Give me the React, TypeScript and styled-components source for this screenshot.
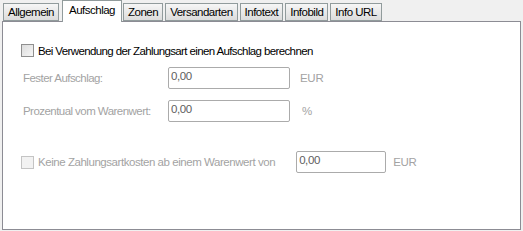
import React from 'react';
import styled, { createGlobalStyle } from 'styled-components';

const GlobalStyle = createGlobalStyle`
    html, body {
        margin: 0;
        padding: 0;
        background: #f0f0f0;
    }
    body {
        font-family: 'Liberation Sans', Arial, sans-serif;
        font-size: 11px;
    }
`;

const Window = styled.div`
    width: 523px;
    height: 231px;
    box-sizing: border-box;
    padding: 0 2px 1px 2px;
    display: flex;
    flex-direction: column;
`;

const TabStrip = styled.div`
    display: flex;
    align-items: flex-end;
    padding-left: 1px;
    height: 21px;
    position: relative;
    z-index: 1;
`;

const Tab = styled.div<{ $active?: boolean }>`
    box-sizing: border-box;
    height: ${(p) => (p.$active ? '22px' : '18px')};
    margin: ${(p) => (p.$active ? '0 1px -1px 1px' : '0 2px 0 0')};
    padding: ${(p) => (p.$active ? '2px 6px 0 6px' : '1px 4px 0 4px')};
    border: 1px solid #919b9c;
    border-bottom: ${(p) => (p.$active ? 'none' : '1px solid #919b9c')};
    background: ${(p) => (p.$active ? '#ffffff' : 'linear-gradient(#f6f6f6, #dcdcdc)')};
    color: #000;
    font-size: 11.5px;
    letter-spacing: -0.5px;
    line-height: 15px;
    white-space: nowrap;
`;

const Panel = styled.div`
    flex: 1;
    box-sizing: border-box;
    background: #fff;
    border: 1px solid #8c8c94;
    padding: 21px 0 0 18px;
    display: flex;
    flex-direction: column;
`;

const CheckRow = styled.label<{ $disabled?: boolean }>`
    display: flex;
    align-items: center;
    gap: 3px;
    height: 15px;
    color: ${(p) => (p.$disabled ? '#a3a3a3' : '#000')};
    font-size: 11.5px;
    letter-spacing: ${(p) => (p.$disabled ? '-0.45px' : '-0.62px')};
    white-space: nowrap;
`;

const Box = styled.span<{ $disabled?: boolean }>`
    box-sizing: border-box;
    width: 13px;
    height: 13px;
    border: 1px solid ${(p) => (p.$disabled ? '#c4c4c4' : '#8f8f8f')};
    background: ${(p) =>
        p.$disabled ? '#f2f2f2' : 'linear-gradient(135deg, #dcdcdc, #f6f6f6)'};
    margin-right: 1px;
`;

const FieldGrid = styled.div`
    display: grid;
    grid-template-columns: 145px 122px auto;
    row-gap: 11px;
    align-items: center;
    margin-top: 9px;
    padding-left: 2px;
`;

const FieldLabel = styled.span`
    color: #a3a3a3;
    font-size: 11.5px;
    letter-spacing: -0.55px;
    white-space: nowrap;
`;

const Input = styled.div<{ $width?: number }>`
    box-sizing: border-box;
    width: ${(p) => (p.$width ? `${p.$width}px` : '100%')};
    height: 22px;
    border: 1px solid #ababab;
    border-radius: 2px;
    padding: 2px 0 0 2px;
    color: #5e5e5e;
    font-size: 11.5px;
    letter-spacing: -0.4px;
    background: #fff;
`;

const Unit = styled.span<{ $offset?: number }>`
    color: #a3a3a3;
    font-size: 11.5px;
    letter-spacing: -0.3px;
    margin-left: ${(p) => p.$offset ?? 10}px;
`;

const FreeRow = styled.div`
    display: flex;
    align-items: center;
    margin-top: 29px;
`;

const FreeInput = styled(Input)`
    margin-left: 21px;
`;

const tabs = ['Allgemein', 'Aufschlag', 'Zonen', 'Versandarten', 'Infotext', 'Infobild', 'Info URL'];

export default function App() {
    return (
        <>
            <GlobalStyle />
            <Window>
                <TabStrip>
                    {tabs.map((t) => (
                        <Tab key={t} $active={t === 'Aufschlag'}>
                            {t}
                        </Tab>
                    ))}
                </TabStrip>
                <Panel>
                    <CheckRow>
                        <Box />
                        Bei Verwendung der Zahlungsart einen Aufschlag berechnen
                    </CheckRow>
                    <FieldGrid>
                        <FieldLabel>Fester Aufschlag:</FieldLabel>
                        <Input>0,00</Input>
                        <Unit>EUR</Unit>
                        <FieldLabel>Prozentual vom Warenwert:</FieldLabel>
                        <Input>0,00</Input>
                        <Unit $offset={12}>%</Unit>
                    </FieldGrid>
                    <FreeRow>
                        <CheckRow $disabled>
                            <Box $disabled />
                            Keine Zahlungsartkosten ab einem Warenwert von
                        </CheckRow>
                        <FreeInput $width={90}>0,00</FreeInput>
                        <Unit $offset={7}>EUR</Unit>
                    </FreeRow>
                </Panel>
            </Window>
        </>
    );
}
